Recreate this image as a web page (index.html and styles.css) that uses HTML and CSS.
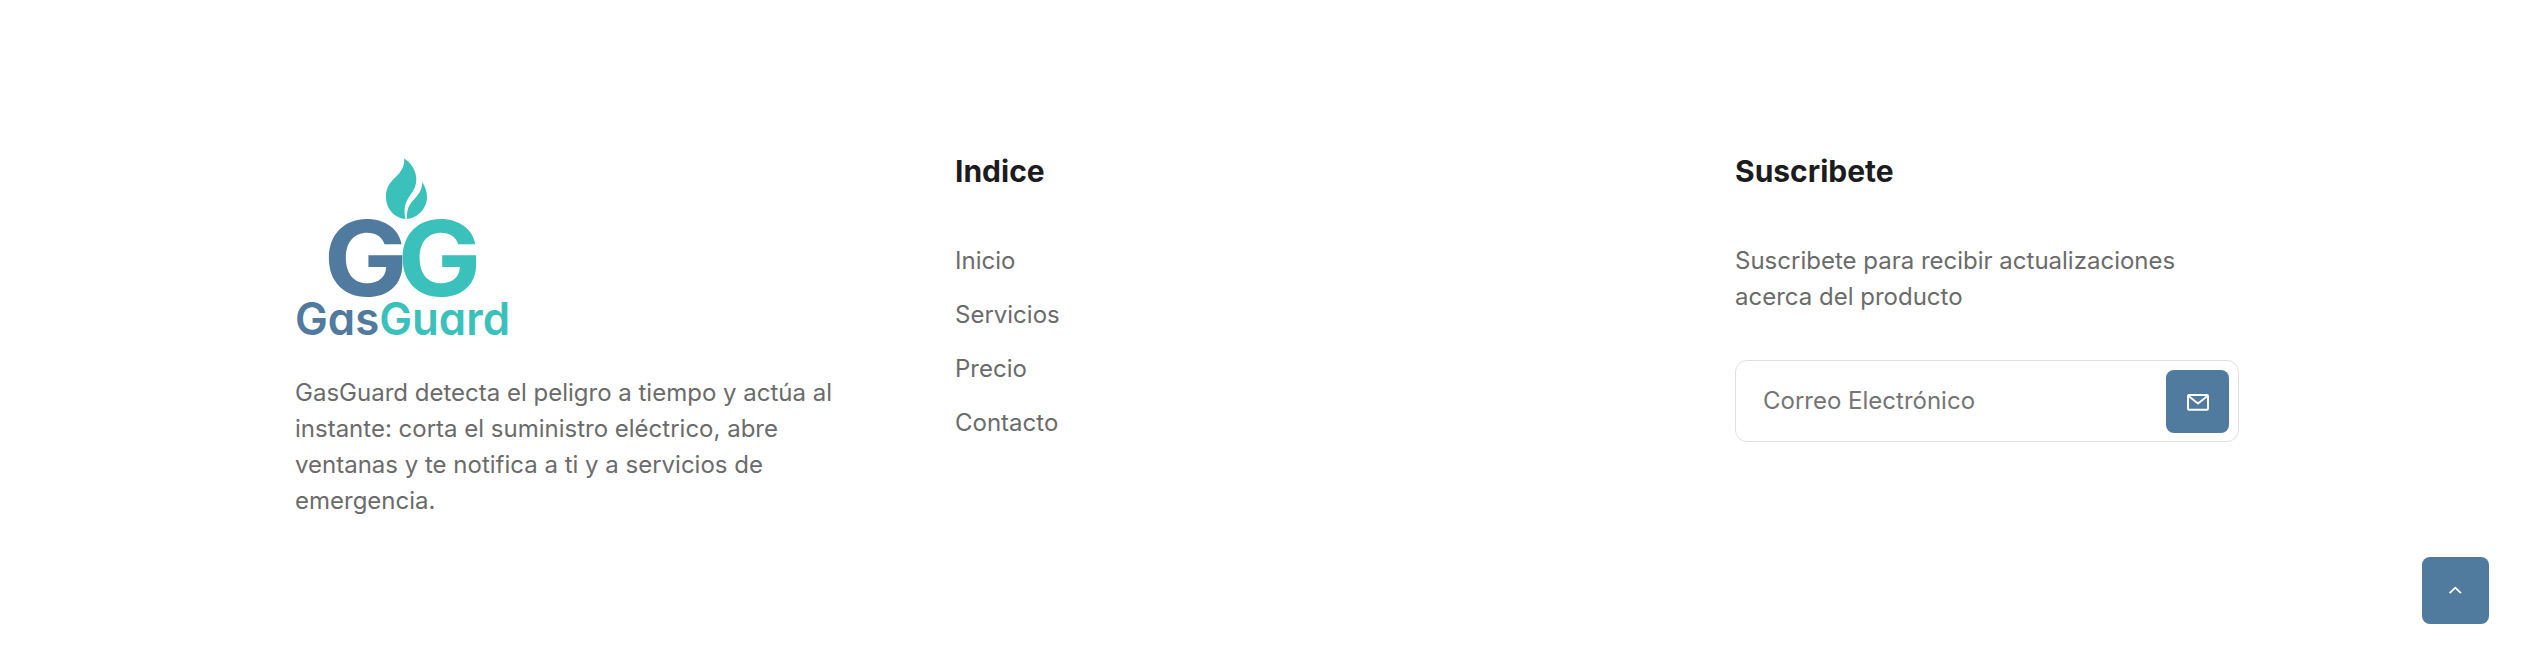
FILE: index.html
```html
<!DOCTYPE html>
<html lang="es">
<head>
<meta charset="utf-8">
<title>GasGuard</title>
<link rel="stylesheet" href="styles.css">
</head>
<body>
<footer class="footer">
  <section class="brand">
    <svg class="logo" viewBox="295 153 216 189" role="img" aria-label="GasGuard">
      <path class="teal" d="M404.200 158.500C411 162.500 416.500 171 416.300 179.500C416.200 192 407.500 195 405 206C404.200 211 404.500 215 405.600 219C395 218.500 386 209 386 197C386 182 396 179 401.500 170C403.500 166.500 404.500 163 404.200 158.500Z"/>
      <path class="teal" d="M422.300 182C425 186.500 427 191 427 197C427 208 418 218 407 219C406.600 214 407.200 209 410 204.500C414 198 422 194 422.300 182Z"/>
      <text class="mono blue" x="323.800" y="296" textLength="84" lengthAdjust="spacingAndGlyphs">G</text>
      <text class="mono teal" x="397.500" y="296" textLength="84" lengthAdjust="spacingAndGlyphs">G</text>
      <text class="word" x="295" y="335" textLength="215" lengthAdjust="spacingAndGlyphs"><tspan class="blue">Gas</tspan><tspan class="teal">Guard</tspan></text>
    </svg>
    <p class="text">GasGuard detecta el peligro a tiempo y actúa al instante: corta el suministro eléctrico, abre ventanas y te notifica a ti y a servicios de emergencia.</p>
  </section>
  <nav class="index">
    <h2 class="title">Indice</h2>
    <ul class="links">
      <li><a href="#">Inicio</a></li>
      <li><a href="#">Servicios</a></li>
      <li><a href="#">Precio</a></li>
      <li><a href="#">Contacto</a></li>
    </ul>
  </nav>
  <section class="subscribe">
    <h2 class="title">Suscribete</h2>
    <p class="text">Suscribete para recibir actualizaciones acerca del producto</p>
    <form class="form">
      <input class="email" type="email" placeholder="Correo Electrónico">
      <button class="send" type="button" aria-label="Enviar">
        <svg width="24" height="24" viewBox="0 0 24 24"><rect x="2" y="5" width="20" height="14.700" rx="1"/><path d="M2.500 6L12 13.500L21.500 6"/></svg>
      </button>
    </form>
  </section>
</footer>
<a class="to-top" href="#" aria-label="Subir"><svg width="16" height="16" viewBox="0 0 16 16"><path d="M1.600 10.200L7.300 4.700L13 10.200"/></svg></a>
</body>
</html>
```
FILE: styles.css
```css
* { box-sizing: border-box; }
body { margin: 0; background: #fff; color: #6b6b6b; font: 24px/36px Inter, sans-serif; overflow: hidden; }
.footer { display: grid; grid-template-columns: 660px 780px 504px; padding: 153px 295px 0; }
.logo { display: block; width: 216px; height: 189px; margin-bottom: 33px; overflow: visible; }
.blue { fill: #507a9e; }
.teal { fill: #3bc1bb; }
.mono { font: 750 104px Inter, sans-serif; }
.word { font: 600 45.5px Inter, sans-serif; font-feature-settings: "cv11" 1; }
.text { margin: 0; }
.brand .text { width: 560px; }
.title { margin: 0 0 54px; color: #1c1c1e; font-size: 30px; font-weight: 700; line-height: 36px; }
.links { display: flex; flex-direction: column; gap: 18px; margin: 0; padding: 0; list-style: none; }
.links a { color: inherit; text-decoration: none; }
.form { display: flex; align-items: center; height: 82px; margin-top: 45px; padding: 0 9px 0 27px; border: 1px solid #e0e0e0; border-radius: 12px; }
.email { flex: 1; min-width: 0; height: 36px; padding: 0; border: 0; outline: 0; background: none; font: inherit; }
.email::placeholder { color: #757575; opacity: 1; }
.send { display: grid; place-items: center; width: 63px; height: 63px; padding: 0; border: 0; border-radius: 8px; background: #507a9e; }
.send svg { position: relative; top: 1px; fill: none; stroke: #fff; stroke-width: 1.9; stroke-linejoin: round; }
.to-top { position: fixed; right: 45px; bottom: 45px; display: grid; place-items: center; width: 67px; height: 67px; border-radius: 8px; background: #507a9e; }
.to-top svg { fill: none; stroke: #fff; stroke-width: 1.8; }
```
